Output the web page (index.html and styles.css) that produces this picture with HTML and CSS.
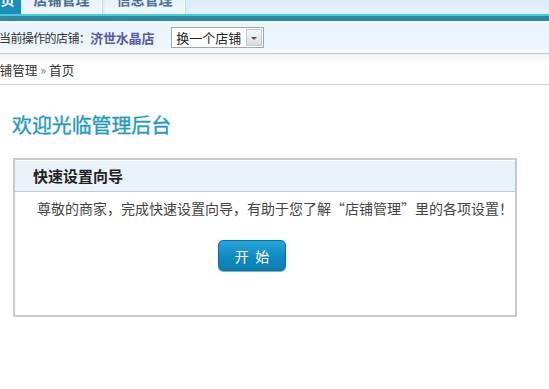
FILE: index.html
```html
<!DOCTYPE html>
<html lang="zh-CN">
<head>
  <meta charset="utf-8">
  <title>管理后台</title>
  <link rel="stylesheet" href="styles.css">
</head>
<body>
  <div class="page">
    <div class="nav">
      <a class="tab tab-on">首页</a>
      <a class="tab">店铺管理</a>
      <a class="tab">信息管理</a>
    </div>
    <div class="nav-rule"></div>

    <div class="shopbar">
      <span class="shop-label">当前操作的店铺：</span>
      <span class="shop-name">济世水晶店</span>
      <span class="shop-select">
        <span class="shop-select-text">换一个店铺</span>
        <span class="shop-select-arrow"></span>
      </span>
    </div>

    <div class="crumb">店铺管理 <span class="crumb-sep">»</span> 首页</div>
  </div>

  <div class="main">
    <h1 class="welcome">欢迎光临管理后台</h1>

    <div class="guide">
      <div class="guide-head">快速设置向导</div>
      <div class="guide-body">
        <p>尊敬的商家，完成快速设置向导，有助于您了解“店铺管理”里的各项设置！</p>
        <button class="start-button">开&nbsp;&nbsp;始</button>
      </div>
    </div>
  </div>
</body>
</html>
```

FILE: styles.css
```css
  body {
    margin: 0;
    font-family: "Noto Sans CJK SC", "DejaVu Sans", sans-serif;
    font-size: 12px;
    color: #333;
    background: #fff;
  }

  .page {
    margin-left: -20px;
  }

  .nav {
    display: flex;
    height: 30px;
    margin-top: -16px;
    background: linear-gradient(#d4e8f8, #e4f0fb);
  }

  .tab {
    width: 79px;
    margin-right: 3px;
    text-align: center;
    font-size: 14px;
    font-weight: bold;
    line-height: 30px;
    color: #4b6f8e;
    background: linear-gradient(#e0eef9, #edf6fd);
    border-right: 1px solid #fff;
    box-shadow: 1px 0 0 #c9dbe8;
    overflow: hidden;
  }

  .tab-on {
    width: 41px;
    margin-right: 1px;
    color: #fff;
    background: #1c8dba;
    border-right: none;
    box-shadow: none;
  }

  .nav-rule {
    height: 5px;
    border-top: 2px solid #4cc8de;
    background: #2f8aa0;
  }

  .shopbar {
    display: flex;
    align-items: center;
    height: 32px;
    padding-left: 19px;
    background: linear-gradient(#fbfdff, #ebf5fd 10%, #eef6fd 90%, #f9fcff);
    border-bottom: 1px solid #c6cbd0;
  }

  .shop-label {
    letter-spacing: -0.6px;
  }

  .shop-name {
    font-size: 13px;
    font-weight: bold;
    letter-spacing: -0.2px;
    color: #5b58a8;
  }

  .shop-select {
    display: flex;
    align-items: stretch;
    height: 19px;
    margin-left: 17px;
    margin-top: 1px;
    border: 1px solid #9ea6ae;
    background: #fff;
  }

  .shop-select-text {
    padding: 0 4px;
    font-size: 13px;
    line-height: 19px;
    color: #222;
  }

  .shop-select-arrow {
    position: relative;
    width: 14px;
    margin: 1px;
    background: linear-gradient(#f4f6f8, #d8dde2);
    border: 1px solid #c4cad0;
  }

  .shop-select-arrow::after {
    content: "";
    position: absolute;
    left: 4px;
    top: 7px;
    border-left: 3px solid transparent;
    border-right: 3px solid transparent;
    border-top: 3px solid #555;
  }

  .crumb {
    height: 30px;
    padding-left: 7px;
    font-size: 12.6px;
    line-height: 31px;
    background: linear-gradient(#eef1f3, #fff 30%);
    border-bottom: 1px solid #cdd1d4;
  }

  .crumb-sep {
    color: #777;
  }

  .main {
    padding: 0 32px 0 13px;
  }

  .welcome {
    margin: 25px 0 0 -1px;
    font-size: 19.9px;
    font-weight: normal;
    line-height: 30px;
    color: #2699c0;
    -webkit-text-stroke: 0.35px #2699c0;
  }

  .guide {
    width: 500px;
    height: 155px;
    margin-top: 18px;
    border: 2px solid #c9c9c9;
    box-sizing: content-box;
  }

  .guide-head {
    height: 30px;
    padding-left: 18px;
    font-size: 15px;
    font-weight: bold;
    line-height: 29px;
    color: #222;
    background: #eaf3fc;
    border-top: 1px solid #fff;
    border-bottom: 1px solid #c2ccd6;
  }

  .guide-body {
    padding-left: 20px;
    text-align: center;
  }

  .guide-body p {
    margin: 6px 0 0;
    font-size: 14px;
    line-height: 20px;
    color: #444;
  }

  .start-button {
    width: 68px;
    height: 31px;
    margin-top: 22px;
    margin-right: 46px;
    font-family: inherit;
    font-size: 14px;
    color: #fff;
    background: linear-gradient(#27a6dc, #1189c0 55%, #0d7db0);
    border: 1px solid #0f6f9c;
    border-radius: 5px;
    box-shadow: 0 1px 1px #7fa9bd;
    cursor: pointer;
  }
```
